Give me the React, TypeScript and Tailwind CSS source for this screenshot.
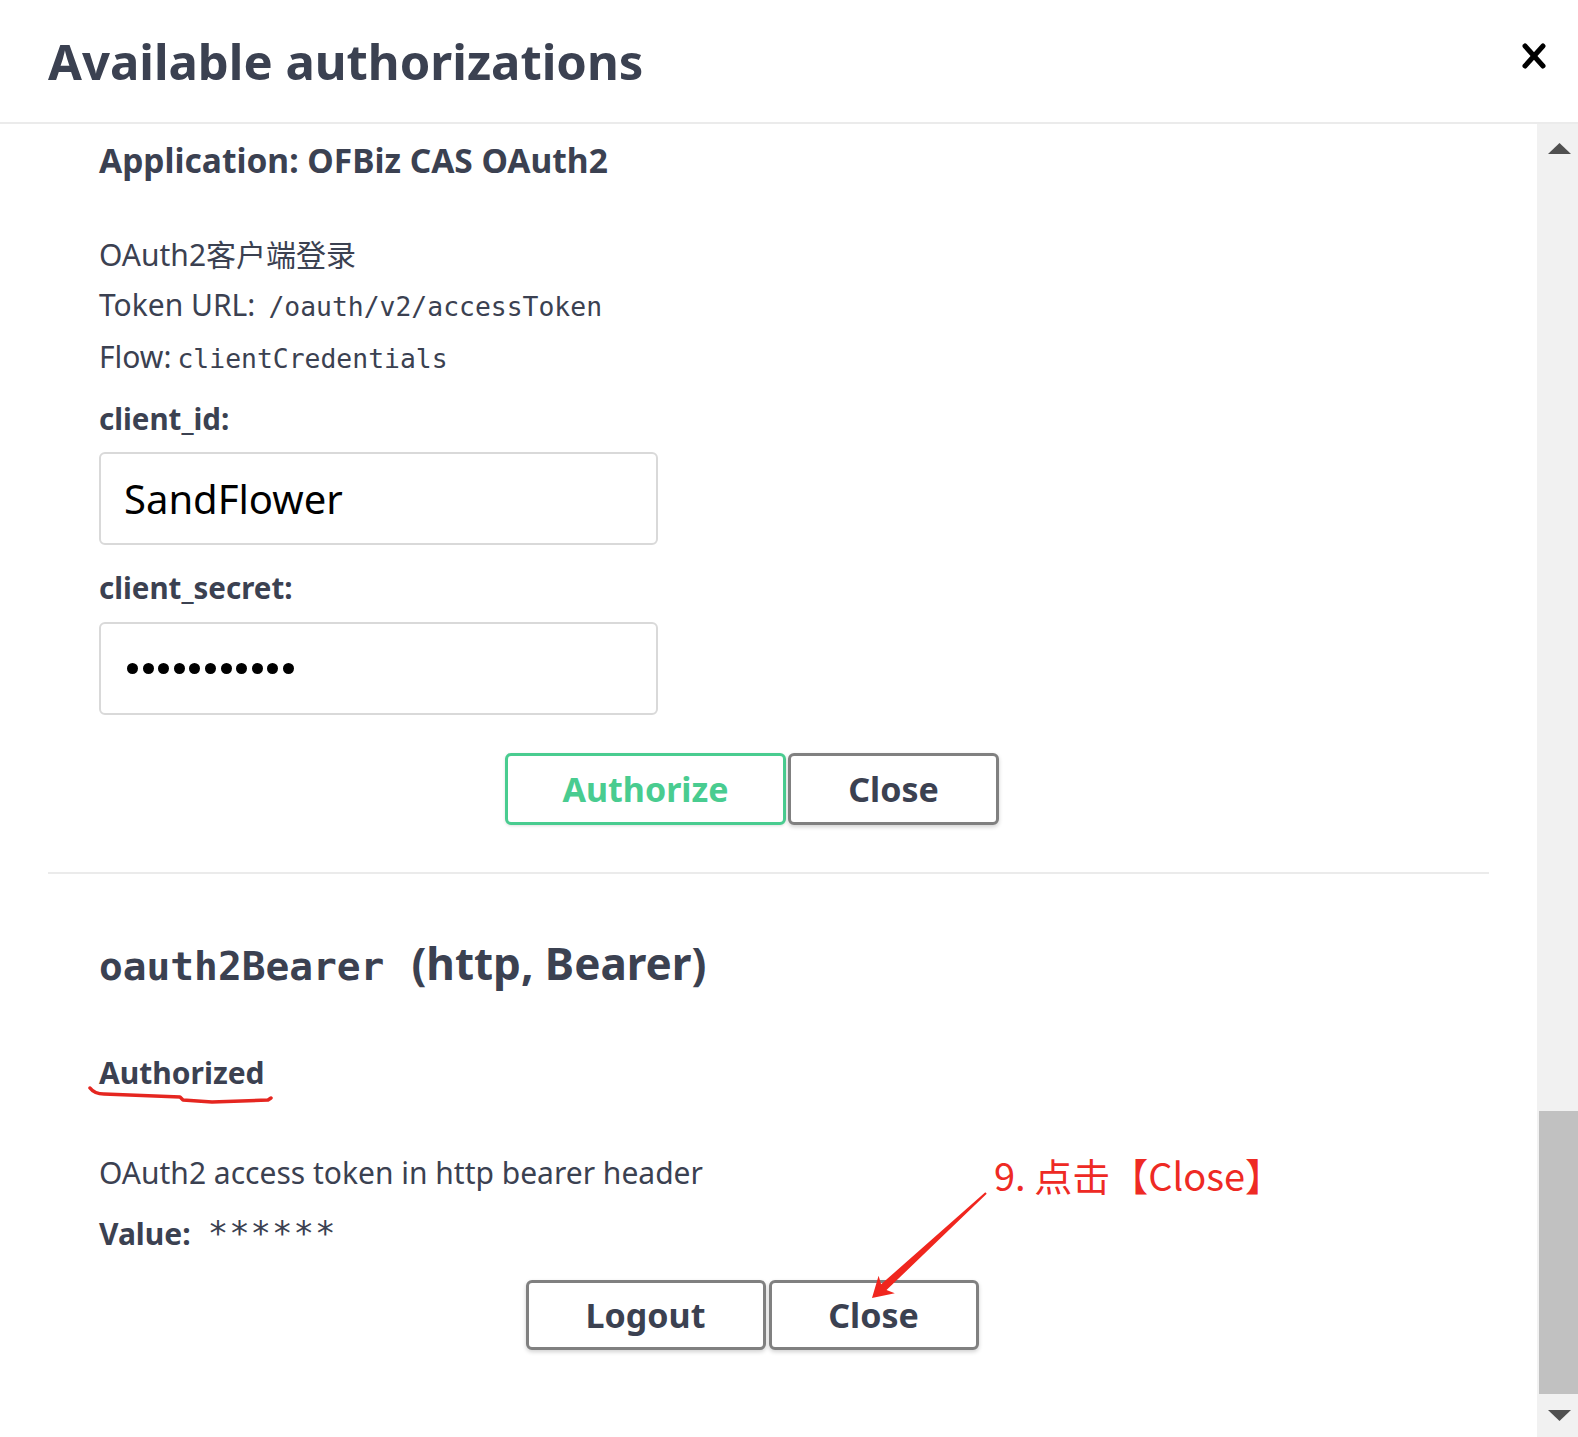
import React from "react";

const sans = { fontFamily: '"Noto Sans", "Noto Sans CJK SC", sans-serif' };
const mono = { fontFamily: '"DejaVu Sans Mono", "Liberation Mono", monospace' };
const cjk = { fontFamily: '"Noto Sans CJK SC", "Noto Sans", sans-serif' };

function Btn({ label, w, h, green }: { label: string; w: string; h: string; green?: boolean }) {
  return (
    <button
      className={
        green
          ? `${w} ${h} border-[3px] border-[#49cc90] rounded-[6px] bg-white text-[#49cc90] text-[34px] font-bold shadow-[0_1px_3px_rgba(0,0,0,0.12)] flex items-center justify-center`
          : `${w} ${h} border-[3px] border-[#808080] rounded-[6px] bg-white text-[#3b4151] text-[34px] font-bold shadow-[0_2px_4px_rgba(0,0,0,0.18)] flex items-center justify-center`
      }
      style={sans}
    >
      {label}
    </button>
  );
}

export default function App() {
  return (
    <div className="relative w-[1578px] h-[1437px] bg-white overflow-hidden flex flex-col text-[#3b4151]" style={sans}>
      {/* Header */}
      <div className="h-[124px] shrink-0 border-b-2 border-[#ebebeb] flex items-start justify-between pl-[48px] pr-[32px] pt-[31px]">
        <h3 className="text-[49px] leading-[60px] font-bold text-[#3b4151]">Available authorizations</h3>
        <svg width="24" height="26" viewBox="0 0 24 26" className="mt-[12px]">
          <line x1="3" y1="3" x2="21" y2="23" stroke="#000" strokeWidth="5" strokeLinecap="round" />
          <line x1="21" y1="3" x2="3" y2="23" stroke="#000" strokeWidth="5" strokeLinecap="round" />
        </svg>
      </div>

      {/* Body */}
      <div className="flex-1 flex min-h-0">
        <div className="flex-1 px-[48px] overflow-hidden">
          <div className="pl-[51px] pt-[16px]">
            <h4 className="text-[33.5px] leading-[40px] font-bold">Application: OFBiz CAS OAuth2</h4>
            <div className="mt-[50px] text-[30px] leading-[50px]">
              <p>OAuth2客户端登录</p>
              <p>
                Token URL:<span className="ml-[13px] text-[26.4px]" style={mono}>/oauth/v2/accessToken</span>
              </p>
              <p>
                Flow:<span className="ml-[6px] text-[26.4px]" style={mono}>clientCredentials</span>
              </p>
            </div>
            <label className="block mt-[15px] text-[29.5px] leading-[40px] font-bold">client_id:</label>
            <div className="mt-[13px] w-[559px] h-[93px] border-2 border-[#d9d9d9] rounded-[6px] flex items-center pl-[23px] text-[40px] text-black">
              SandFlower
            </div>
            <label className="block mt-[23px] text-[29.5px] leading-[40px] font-bold">client_secret:</label>
            <div className="mt-[14px] w-[559px] h-[93px] border-2 border-[#d9d9d9] rounded-[6px] flex items-center pl-[26px] gap-[4.6px]">
              {Array.from({ length: 11 }).map((_, i) => (
                <span key={i} className="w-[11px] h-[11px] rounded-full bg-black" />
              ))}
            </div>
          </div>

          <div className="mt-[38px] flex justify-center pr-[33px] gap-[2px]">
            <Btn label="Authorize" w="w-[281px]" h="h-[72px]" green />
            <Btn label="Close" w="w-[211px]" h="h-[72px]" />
          </div>

          <div className="mt-[47px] h-[2px] bg-[#ebebeb]" />

          <div className="pl-[51px]">
            <h4 className="mt-[61px] text-[44px] leading-[56px] font-bold">
              <code className="text-[39.5px] font-bold" style={mono}>oauth2Bearer</code>
              <span className="ml-[27px]">(http, Bearer)</span>
            </h4>
            <h6 className="mt-[59px] text-[30px] leading-[40px] font-bold">Authorized</h6>
            <p className="mt-[55px] text-[30px] leading-[50px]">OAuth2 access token in http bearer header</p>
            <p className="mt-[10px] text-[30px] leading-[50px]">
              <span className="font-bold">Value:</span>
              <span className="ml-[17px] text-[34px] tracking-[1px]" style={mono}>******</span>
            </p>
          </div>

          <div className="mt-[21px] flex justify-center pr-[33px] gap-[3px]">
            <Btn label="Logout" w="w-[240px]" h="h-[70px]" />
            <Btn label="Close" w="w-[210px]" h="h-[70px]" />
          </div>
        </div>

        {/* Scrollbar */}
        <div className="w-[41px] shrink-0 bg-[#f1f1f1] flex flex-col">
          <div className="h-[49px] flex items-center justify-center pl-[4px]">
            <svg width="23" height="11" viewBox="0 0 23 11">
              <polygon points="0,11 11.5,0 23,11" fill="#505050" />
            </svg>
          </div>
          <div className="flex-1">
            <div className="mt-[938px] ml-[2px] h-[283px] bg-[#c1c1c1]" />
          </div>
          <div className="h-[43px] flex items-center justify-center pl-[4px]">
            <svg width="23" height="11" viewBox="0 0 23 11">
              <polygon points="0,0 23,0 11.5,11" fill="#505050" />
            </svg>
          </div>
        </div>
      </div>

      {/* Annotations overlay */}
      <div className="absolute left-[994px] top-[1148px] text-[38px] leading-[54px] text-[#ee2a24] whitespace-nowrap" style={cjk}>
        9. 点击【Close】
      </div>
      <svg className="absolute left-0 top-0 pointer-events-none" width="1578" height="1437" viewBox="0 0 1578 1437">
        <polygon
          points="985.3,1192.3 986.7,1193.7 886.5,1290.1 894.8,1293.3 872,1298 878.6,1275.7 881.1,1284.3"
          fill="#f0261e"
        />
        <path
          d="M90 1088 C 93 1092, 98 1094, 104 1094 L 180 1097 L 183 1100 L 212 1102 L 268 1100 L 271 1098"
          fill="none"
          stroke="#e52620"
          strokeWidth="3.5"
          strokeLinecap="round"
          strokeLinejoin="round"
        />
      </svg>
    </div>
  );
}
